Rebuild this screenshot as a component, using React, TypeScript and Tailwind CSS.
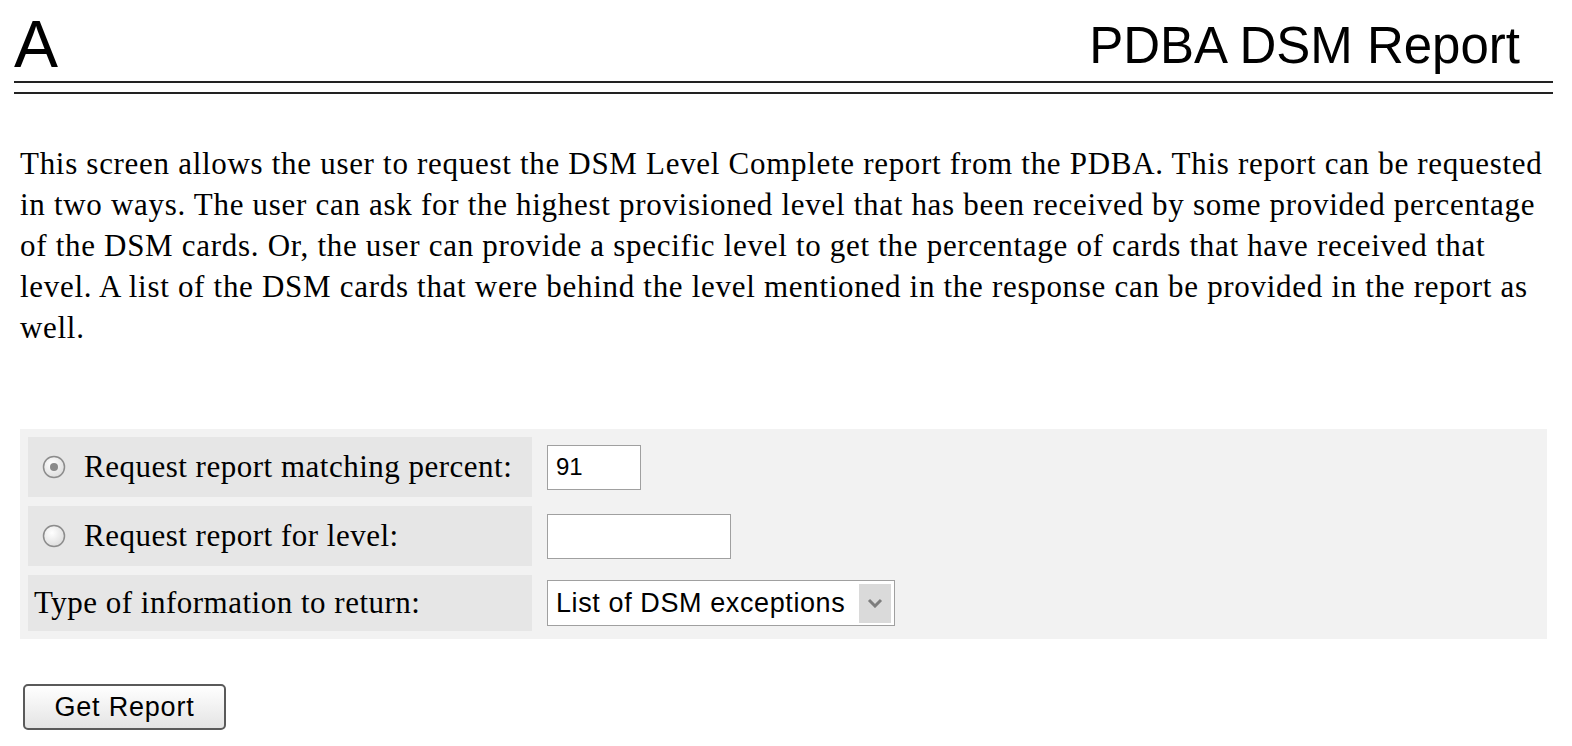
import React from "react";

const serif = "font-['Liberation_Serif','Times_New_Roman',serif]";
const sans = "font-['Liberation_Sans',Arial,sans-serif]";

const Radio = ({ checked }: { checked?: boolean }) => (
  <svg width="24" height="24" viewBox="0 0 24 24" className="shrink-0">
    <defs>
      <radialGradient id={checked ? "rg1" : "rg2"} cx="40%" cy="35%" r="70%">
        <stop offset="0%" stopColor="#ffffff" />
        <stop offset="100%" stopColor="#dcdcdc" />
      </radialGradient>
    </defs>
    <circle cx="12" cy="12" r="10.5" fill={`url(#${checked ? "rg1" : "rg2"})`} stroke="#8c8c8c" strokeWidth="1.5" />
    {checked && <circle cx="12" cy="12" r="4" fill="#8a8a8a" />}
  </svg>
);

const LabelCell = ({ children }: { children: React.ReactNode }) => (
  <div className={`bg-[#e6e6e6] flex items-center pl-[6px] text-[31px] tracking-[0.5px] text-black ${serif}`}>
    {children}
  </div>
);

const App = () => {
  return (
    <div className="w-[1572px] h-[746px] bg-white overflow-hidden">
      {/* header */}
      <div className="ml-[14px] w-[1539px]">
        <div className="flex justify-between items-start h-[81px]">
          <span className={`mt-[11px] text-[66px] leading-none text-black ${sans}`}>A</span>
          <span className={`mt-[20px] mr-[33px] text-[51px] leading-none text-black ${sans}`}>PDBA DSM Report</span>
        </div>
        <div className="h-[13px] border-y-2 border-[#222]" />
      </div>

      <p className={`mt-[49px] ml-[20px] w-[1532px] text-[31px] leading-[41px] tracking-[0.7px] text-black ${serif}`}>
        This screen allows the user to request the DSM Level Complete report from the PDBA. This report can be requested
        in two ways. The user can ask for the highest provisioned level that has been received by some provided percentage
        of the DSM cards. Or, the user can provide a specific level to get the percentage of cards that have received that
        level. A list of the DSM cards that were behind the level mentioned in the response can be provided in the report as
        well.
      </p>

      {/* form table */}
      <div className="mt-[81px] ml-[20px] w-[1527px] bg-[#f2f2f2] p-[8px] grid grid-cols-[504px_1fr] grid-rows-[60px_60px_56px] gap-y-[9px] gap-x-[15px]">
        <LabelCell>
          <span className="ml-[8px] mr-[18px] flex"><Radio checked /></span>
          Request report matching percent:
        </LabelCell>
        <div className="flex items-center">
          <div className={`w-[94px] h-[45px] bg-white border border-[#a0a0a0] flex items-center pl-[8px] text-[24px] text-black ${sans}`}>
            91
          </div>
        </div>

        <LabelCell>
          <span className="ml-[8px] mr-[18px] flex"><Radio /></span>
          Request report for level:
        </LabelCell>
        <div className="flex items-center">
          <div className="w-[184px] h-[45px] bg-white border border-[#a0a0a0]" />
        </div>

        <LabelCell>Type of information to return:</LabelCell>
        <div className="flex items-center">
          <div className={`w-[348px] h-[46px] bg-white border border-[#a0a0a0] flex items-center justify-between pl-[8px] pr-[3px] text-[27px] tracking-[0.6px] text-black ${sans}`}>
            <span>List of DSM exceptions</span>
            <span className="w-[32px] h-[39px] bg-[#dadada] flex items-center justify-center">
              <svg width="16" height="10" viewBox="0 0 16 10">
                <path d="M2 2 L8 8 L14 2" fill="none" stroke="#7d7d7d" strokeWidth="3" />
              </svg>
            </span>
          </div>
        </div>
      </div>

      <button
        className={`mt-[45px] ml-[23px] w-[203px] h-[46px] rounded-[5px] border-2 border-[#5a5a5a] bg-gradient-to-b from-white to-[#e4e4e4] text-[27px] tracking-[0.8px] text-black ${sans} flex items-center justify-center`}
      >
        Get Report
      </button>
    </div>
  );
};

export default App;
